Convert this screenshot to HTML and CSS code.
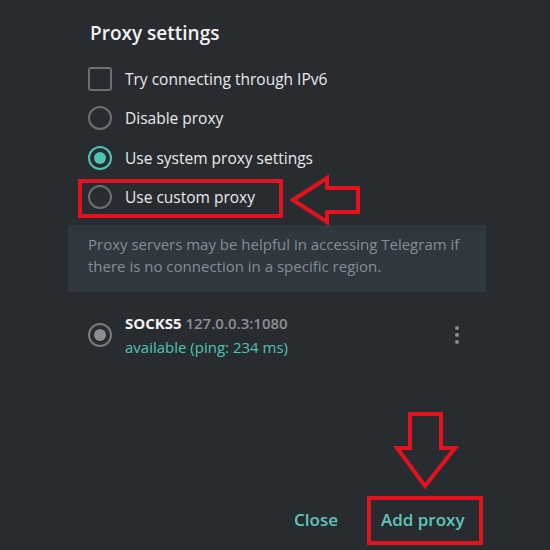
FILE: index.html
```html
<!DOCTYPE html>
<html lang="en">

<head>
    <meta charset="UTF-8">
    <meta name="viewport" content="width=device-width, initial-scale=1.0">
    <title>Proxy settings</title>
    <link rel="stylesheet" href="styles.css">
</head>

<body>
    <div class="box">
        <h1 class="title">Proxy settings</h1>
        <div class="options">
            <label class="option"><span class="check"></span>Try connecting through IPv6</label>
            <label class="option"><span class="radio"></span>Disable proxy</label>
            <label class="option"><span class="radio on"></span>Use system proxy settings</label>
            <label class="option"><span class="radio"></span>Use custom proxy</label>
        </div>
        <div class="about">
            Proxy servers may be helpful in accessing Telegram if there is no connection in a specific region.
        </div>
        <div class="proxy">
            <span class="radio gray"></span>
            <div class="proxy-info">
                <div><b>SOCKS5</b> <span class="addr">127.0.0.3:1080</span></div>
                <div class="status">available (ping: 234 ms)</div>
            </div>
            <span class="menu"><i></i><i></i><i></i></span>
        </div>
        <div class="footer">
            <button class="btn">Close</button>
            <button class="btn">Add proxy</button>
        </div>
    </div>

    <!-- red annotation marks -->
    <svg class="marks" width="550" height="550" viewBox="0 0 550 550">
        <g fill="none" stroke="#e3121c" stroke-width="4" stroke-linejoin="miter">
            <rect x="80" y="181" width="201" height="35" />
            <path d="M293 200 L327 178 L327 188 L358 188 L358 212 L327 212 L327 222 Z" />
            <path d="M410 414 L441 414 L441 448 L455 448 L425 486 L397 448 L410 448 Z" />
            <rect x="369" y="498" width="112" height="45" />
        </g>
    </svg>
</body>

</html>
```

FILE: styles.css
```css
body {
    margin: 0;
    background: #282c31;
    font-family: "Open Sans", "Noto Sans", sans-serif;
    color: #e8e9ea;
}
.box {
    position: relative;
    height: 550px;
    display: flex;
    flex-direction: column;
}
.title {
    margin: 20px 0 0 90px;
    font-size: 19px;
    font-weight: 600;
    line-height: 26px;
    color: #f2f2f2;
}
.options {
    margin: 13px 0 0 88px;
}
.option {
    display: flex;
    align-items: center;
    gap: 13px;
    height: 39.5px;
    font-size: 15.5px;
}
.check {
    width: 20px;
    height: 20px;
    border: 2px solid #6b6e72;
    border-radius: 3px;
}
.radio {
    width: 20px;
    height: 20px;
    border: 2px solid #6b6e72;
    border-radius: 50%;
    box-sizing: content-box;
    position: relative;
}
.radio.on {
    border-color: #4fc3b3;
}
.radio.on::after,
.radio.gray::after {
    content: "";
    position: absolute;
    left: 4px;
    top: 4px;
    width: 12px;
    height: 12px;
    border-radius: 50%;
    background: #4fc3b3;
}
.radio.gray {
    border-color: #76797d;
}
.radio.gray::after {
    background: #8b8d90;
}
.about {
    margin: 8px 0 0 68px;
    width: 378px;
    padding: 8px 20px 15px;
    background: #2f373f;
    font-size: 15px;
    line-height: 22px;
    color: #878d94;
}
.proxy {
    display: flex;
    align-items: center;
    margin: 19px 0 0 88px;
    width: 380px;
}
.proxy .radio {
    margin-right: 13px;
}
.proxy-info {
    flex: 1;
    font-size: 15px;
    line-height: 24px;
}
.proxy-info b {
    color: #f2f2f2;
}
.addr {
    color: #8b8f93;
    font-weight: 600;
}
.status {
    color: #4fc3b3;
}
.menu {
    display: flex;
    flex-direction: column;
    gap: 3px;
    margin-right: 9px;
}
.menu i {
    width: 4px;
    height: 4px;
    border-radius: 50%;
    background: #8b8d90;
}
.footer {
    margin-top: auto;
    display: flex;
    gap: 19px;
    padding: 0 0 13px 282px;
}
.btn {
    background: none;
    border: none;
    padding: 6px 12px;
    font-family: inherit;
    font-size: 17px;
    font-weight: 600;
    color: #5ec6b8;
    cursor: pointer;
}
.marks {
    position: absolute;
    left: 0;
    top: 0;
}
```
